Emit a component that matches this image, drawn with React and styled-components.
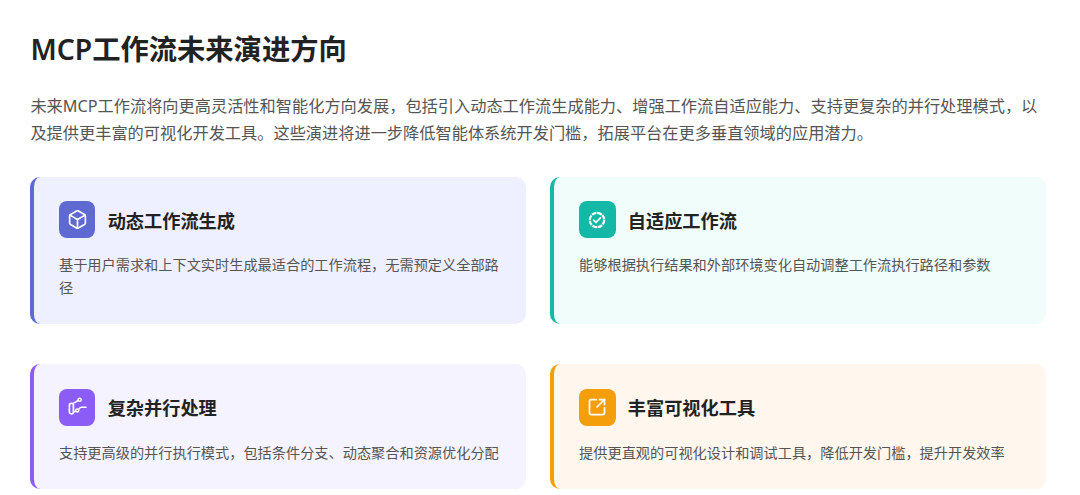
import React from "react";
import styled, { createGlobalStyle } from "styled-components";
import { Box, SquareArrowOutUpRight } from "lucide-react";

const AdaptIcon = () => (
  <svg width="20" height="20" viewBox="0 0 20 20" fill="none" stroke="#fff" strokeLinecap="round" strokeLinejoin="round">
    <circle cx="10" cy="10" r="7.2" strokeWidth="2.2" strokeDasharray="4.9 0.75" strokeLinecap="butt" />
    <path d="M6.6 10.2l2.4 2.2 4.4-4.6" strokeWidth="1.7" />
  </svg>
);

const ParallelIcon = () => (
  <svg width="22" height="22" viewBox="0 0 22 22" fill="none" stroke="#fff" strokeLinecap="round" strokeLinejoin="round">
    <rect x="3.4" y="7.4" width="4" height="10.4" rx="1.8" strokeWidth="1.7" />
    <circle cx="13.6" cy="3.8" r="1.5" strokeWidth="1.5" />
    <circle cx="11.2" cy="14.4" r="1.5" strokeWidth="1.5" />
    <path d="M7.6 7c1.8-.2 2.8-1.2 4.4-2.6M12.6 13.6c.8-1.4 1.4-2.4 2.6-2.4H20M7.8 16l2-1" strokeWidth="1.6" />
  </svg>
);

const cards = [
  {
    title: "动态工作流生成",
    desc: "基于用户需求和上下文实时生成最适合的工作流程，无需预定义全部路径",
    color: "#5e6ad2",
    bg: "#eef0ff",
    icon: <Box size={21} color="#fff" strokeWidth={1.9} />,
  },
  {
    title: "自适应工作流",
    desc: "能够根据执行结果和外部环境变化自动调整工作流执行路径和参数",
    color: "#14b8a6",
    bg: "#f0fdfa",
    icon: <AdaptIcon />,
  },
  {
    title: "复杂并行处理",
    desc: "支持更高级的并行执行模式，包括条件分支、动态聚合和资源优化分配",
    color: "#8b5cf6",
    bg: "#f5f3ff",
    icon: <ParallelIcon />,
  },
  {
    title: "丰富可视化工具",
    desc: "提供更直观的可视化设计和调试工具，降低开发门槛，提升开发效率",
    color: "#f59e0b",
    bg: "#fff6ed",
    icon: <SquareArrowOutUpRight size={20} color="#fff" strokeWidth={2.1} />,
  },
];

const App = () => (
  <>
    <GlobalStyle />
    <Page>
      <Title>MCP工作流未来演进方向</Title>
      <Intro>
        未来MCP工作流将向更高灵活性和智能化方向发展，包括引入动态工作流生成能力、增强工作流自适应能力、支持更复杂的并行处理模式，以及提供更丰富的可视化开发工具。这些演进将进一步降低智能体系统开发门槛，拓展平台在更多垂直领域的应用潜力。
      </Intro>
      <Grid>
        {cards.map((c) => (
          <Card key={c.title} $color={c.color} $bg={c.bg}>
            <CardHead>
              <IconBox $color={c.color}>{c.icon}</IconBox>
              <CardTitle>{c.title}</CardTitle>
            </CardHead>
            <CardText>{c.desc}</CardText>
          </Card>
        ))}
      </Grid>
    </Page>
  </>
);

export default App;

const GlobalStyle = createGlobalStyle`
  html, body {
    margin: 0;
    padding: 0;
    background: #fff;
    overflow: hidden;
  }
  body {
    font-family: "Noto Sans", "Noto Sans CJK SC", sans-serif;
  }
`;

const Page = styled.div`
  width: 1080px;
  height: 495px;
  padding: 29px 34px 0 30.4px;
  box-sizing: border-box;
`;

const Title = styled.h1`
  margin: 0 0 24px;
  font-size: 28.3px;
  line-height: 40px;
  font-weight: 600;
  color: #222;
`;

const Intro = styled.p`
  margin: 0 0 29.7px;
  font-size: 16.22px;
  line-height: 27px;
  color: #555;
`;

const Grid = styled.div`
  display: grid;
  grid-template-columns: 495.8px 495.8px;
  column-gap: 24.3px;
  row-gap: 40.8px;
`;

const Card = styled.div`
  padding: 24.6px 24.3px 24.3px 24.6px;
  border-left: 4px solid ${(p) => p.$color};
  border-radius: 10px;
  background: ${(p) => p.$bg};
`;

const CardHead = styled.div`
  display: flex;
  align-items: center;
  gap: 12.2px;
  margin-bottom: 16.2px;
`;

const IconBox = styled.div`
  width: 36.5px;
  height: 36.5px;
  flex: none;
  display: flex;
  align-items: center;
  justify-content: center;
  border-radius: 8px;
  background: ${(p) => p.$color};
`;

const CardTitle = styled.h3`
  margin: 0;
  font-size: 18.2px;
  font-weight: 600;
  color: #222;
`;

const CardText = styled.p`
  margin: 0;
  font-size: 14.2px;
  line-height: 22.7px;
  color: #555;
`;
